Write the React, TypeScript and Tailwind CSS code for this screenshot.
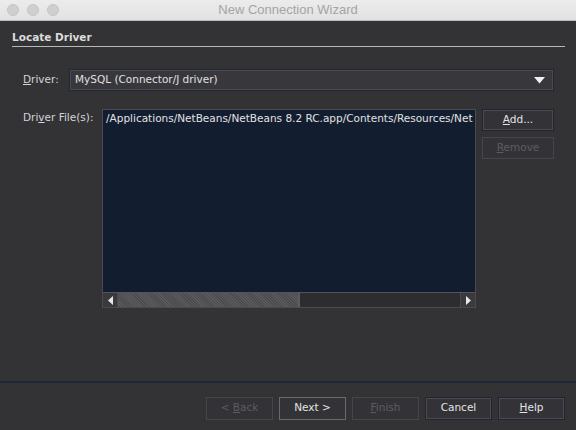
import React from 'react';

const FONT = "font-['DejaVu_Sans','Liberation_Sans',sans-serif]";

function Btn({
  children,
  disabled,
  strong,
  className = '',
}: {
  children: React.ReactNode;
  disabled?: boolean;
  strong?: boolean;
  className?: string;
}) {
  const tone = disabled
    ? 'border-[#46464a] text-[#5c5c60]'
    : strong
      ? 'border-[#6a6a6e] text-[#e4e4e4]'
      : 'border-[#1d2633] text-[#e4e4e4] shadow-[inset_0_0_0_1px_#4a4a4f]';
  return (
    <div
      className={`flex items-center justify-center border bg-[#333337] text-[10.5px] ${tone} ${className}`}
    >
      {children}
    </div>
  );
}

export default function App() {
  return (
    <div className={`w-[576px] h-[430px] flex flex-col bg-[#333336] ${FONT}`}>
      {/* Title bar */}
      <div className="relative h-[21px] shrink-0 flex items-center bg-gradient-to-b from-[#ececec] to-[#e2e2e2] border-b border-[#bdbdbd]">
        <div className="flex items-center gap-[8px] pl-[7px]">
          <span className="w-[12px] h-[12px] rounded-full bg-[#cfcfcf] border border-[#c4c4c4]" />
          <span className="w-[12px] h-[12px] rounded-full bg-[#cfcfcf] border border-[#c4c4c4]" />
          <span className="w-[12px] h-[12px] rounded-full bg-[#cfcfcf] border border-[#c4c4c4]" />
        </div>
        <div className="absolute inset-0 flex items-center justify-center text-[13px] text-[#a4a4a4] font-['Liberation_Sans',sans-serif]">
          New Connection Wizard
        </div>
      </div>

      {/* Content */}
      <div className="flex-1 flex flex-col px-[12px] pt-[8px]">
        <div className="border-b border-[#b8b8b8] pb-[2px] mr-[-1px] leading-[14px]">
          <span className="text-[10.5px] font-bold text-[#dcdcdc]">Locate Driver</span>
        </div>

        <div className="flex items-center mt-[22px] pl-[11px]">
          <span className="w-[46px] whitespace-nowrap text-[10.5px] text-[#d4d4d4]">
            <u>D</u>river:
          </span>
          <div className="w-[485px] h-[22px] flex items-center justify-between border border-[#1e2732] bg-[#38383c] shadow-[inset_0_0_0_1px_#4b4b50] pl-[5px] pr-[8px]">
            <span className="text-[10.5px] text-[#e0e0e0]">MySQL (Connector/J driver)</span>
            <svg width="11" height="7" viewBox="0 0 11 7">
              <path d="M0 0 H11 L5.5 6.5 Z" fill="#f0f0f0" />
            </svg>
          </div>
        </div>

        <div className="flex items-start mt-[18px] pl-[11px]">
          <span className="w-[79px] whitespace-nowrap text-[10.5px] text-[#d4d4d4] pt-[1px]">
            Dri<u>v</u>er File(s):
          </span>
          <div className="w-[374px] h-[199px] flex flex-col border border-[#4a4a4f] bg-[#121d30]">
            <div className="flex-1 overflow-hidden whitespace-nowrap pl-[3px] pt-[1px] text-[10.5px] text-[#e2e2e2]">
              /Applications/NetBeans/NetBeans 8.2 RC.app/Contents/Resources/Net
            </div>
            {/* Horizontal scrollbar */}
            <div className="h-[15px] flex bg-[#2e2e31] border-t border-[#555559]">
              <div className="w-[15px] flex items-center justify-center border-r border-[#4a4a4e] bg-[#3a3a3e]">
                <svg width="5" height="9" viewBox="0 0 5 9">
                  <path d="M5 0 V9 L0 4.5 Z" fill="#e8e8e8" />
                </svg>
              </div>
              <div className="w-[182px] bg-[repeating-linear-gradient(45deg,#5a5a5e_0px,#5a5a5e_1px,#4c4c50_1px,#4c4c50_2px)] border-r-2 border-[#5e5e62]" />
              <div className="flex-1 bg-[#2d2d30]" />
              <div className="w-[15px] flex items-center justify-center border-l border-[#4a4a4e] bg-[#3a3a3e]">
                <svg width="5" height="9" viewBox="0 0 5 9">
                  <path d="M0 0 V9 L5 4.5 Z" fill="#e8e8e8" />
                </svg>
              </div>
            </div>
          </div>
          <div className="ml-[6px] flex flex-col gap-[6px]">
            <Btn className="w-[72px] h-[22px]">
              <span>
                <u>A</u>dd...
              </span>
            </Btn>
            <Btn disabled className="w-[72px] h-[22px]">
              <span>
                <u>R</u>emove
              </span>
            </Btn>
          </div>
        </div>
      </div>

      {/* Footer */}
      <div className="h-[49px] shrink-0 border-t-2 border-[#1f2834] flex items-center justify-end gap-[6px] pr-[11px] pt-[3px]">
        <Btn disabled className="w-[67px] h-[23px]">
          <span>
            &lt; <u>B</u>ack
          </span>
        </Btn>
        <Btn strong className="w-[67px] h-[23px]">
          Next &gt;
        </Btn>
        <Btn disabled className="w-[67px] h-[23px]">
          <span>
            <u>F</u>inish
          </span>
        </Btn>
        <Btn className="w-[67px] h-[23px]">Cancel</Btn>
        <Btn className="w-[67px] h-[23px]">
          <span>
            <u>H</u>elp
          </span>
        </Btn>
      </div>
    </div>
  );
}
